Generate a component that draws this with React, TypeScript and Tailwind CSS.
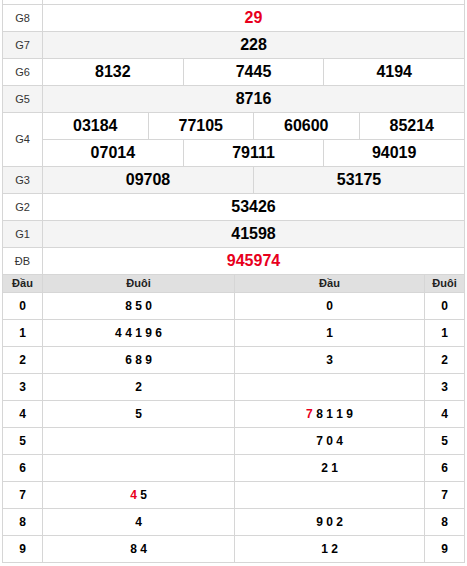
import React from "react";

const line = "border-[#d6d6d6]";

type Prize = { label: string; rows: string[][]; red?: boolean; gray?: boolean };

const prizes: Prize[] = [
  { label: "G8", rows: [["29"]], red: true },
  { label: "G7", rows: [["228"]], gray: true },
  { label: "G6", rows: [["8132", "7445", "4194"]] },
  { label: "G5", rows: [["8716"]], gray: true },
  {
    label: "G4",
    rows: [
      ["03184", "77105", "60600", "85214"],
      ["07014", "79111", "94019"],
    ],
  },
  { label: "G3", rows: [["09708", "53175"]], gray: true },
  { label: "G2", rows: [["53426"]] },
  { label: "G1", rows: [["41598"]], gray: true },
  { label: "ĐB", rows: [["945974"]], red: true },
];

// [digit, tails, heads]; "!" marks the digit drawn in red
const loto: [string, string, string][] = [
  ["0", "850", "0"],
  ["1", "44196", "1"],
  ["2", "689", "3"],
  ["3", "2", ""],
  ["4", "5", "!78119"],
  ["5", "", "704"],
  ["6", "", "21"],
  ["7", "!45", ""],
  ["8", "4", "902"],
  ["9", "84", "12"],
];

function Digits({ value }: { value: string }) {
  const hot = value.startsWith("!");
  const digits = (hot ? value.slice(1) : value).split("");
  return (
    <span>
      {digits.map((d, i) => (
        <span key={i} className={hot && i === 0 ? "text-[#e8001c]" : ""}>
          {d}
          {i < digits.length - 1 ? " " : ""}
        </span>
      ))}
    </span>
  );
}

export default function App() {
  return (
    <div
      className="w-[467px] h-[566px] bg-white overflow-hidden pl-[2px]"
      style={{ fontFamily: '"Liberation Sans", Arial, sans-serif' }}
    >
      <div className={`w-[463px] border-l ${line}`}>
        {/* tail of the previous table */}
        <div className={`flex h-[5px] border-b ${line}`}>
          <div className={`w-[40px] border-r ${line}`} />
          <div className={`flex-1 border-r ${line}`} />
        </div>

        {prizes.map((p) => (
          <div key={p.label} className={`flex ${p.gray ? "bg-[#f4f4f4]" : "bg-white"}`}>
            <div
              className={`w-[40px] shrink-0 flex items-center justify-center border-r border-b ${line} text-[11px] text-[#333]`}
            >
              {p.label}
            </div>
            <div className="flex-1 flex flex-col">
              {p.rows.map((r, ri) => (
                <div key={ri} className={`flex h-[27px] border-b ${line}`}>
                  {r.map((n, ni) => (
                    <div
                      key={ni}
                      className={`flex-1 basis-0 flex items-center justify-center border-r ${line} text-[16px] font-bold ${
                        p.red ? "text-[#e8001c]" : "text-black"
                      }`}
                    >
                      {n}
                    </div>
                  ))}
                </div>
              ))}
            </div>
          </div>
        ))}

        {/* loto table */}
        <div className={`flex h-[18px] bg-[#e0e0e0] border-b ${line} text-[11px] font-bold text-[#222]`}>
          <div className={`w-[40px] flex items-center justify-center border-r ${line}`}>Đầu</div>
          <div className={`w-[192px] flex items-center justify-center border-r ${line}`}>Đuôi</div>
          <div className={`flex-1 flex items-center justify-center border-r ${line}`}>Đầu</div>
          <div className={`w-[40px] flex items-center justify-center border-r ${line}`}>Đuôi</div>
        </div>
        {loto.map(([d, tails, heads]) => (
          <div key={d} className={`flex h-[27px] border-b ${line} text-[12px] font-bold text-black`}>
            <div className={`w-[40px] flex items-center justify-center border-r ${line}`}>{d}</div>
            <div className={`w-[192px] flex items-center justify-center border-r ${line}`}>
              <Digits value={tails} />
            </div>
            <div className={`flex-1 flex items-center justify-center border-r ${line}`}>
              <Digits value={heads} />
            </div>
            <div className={`w-[40px] flex items-center justify-center border-r ${line}`}>{d}</div>
          </div>
        ))}
      </div>
    </div>
  );
}
